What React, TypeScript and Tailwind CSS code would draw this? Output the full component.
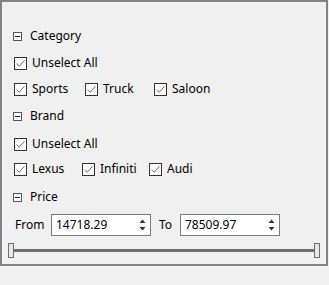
import React from 'react';

const font = { fontFamily: '"Noto Sans", "Liberation Sans", sans-serif' };

const Check = () => (
  <span className="flex h-[13px] w-[13px] shrink-0 items-center justify-center border border-[#333333] bg-white">
    <svg width="11" height="11" viewBox="0 0 11 11">
      <path d="M1.5 5.5 L4.2 8.3 L9.5 2.2" fill="none" stroke="#6b6b6b" strokeWidth="1" />
    </svg>
  </span>
);

const Collapse = () => (
  <span className="flex h-[9px] w-[9px] shrink-0 items-center justify-center border border-[#555555] bg-white">
    <span className="h-px w-[5px] bg-[#222222]" />
  </span>
);

const Header = ({ label, className }: { label: string; className: string }) => (
  <div className={`flex h-5 items-center pl-[11px] ${className}`}>
    <Collapse />
    <span className="ml-2 text-[12px] text-[#000000]">{label}</span>
  </div>
);

const Item = ({ label, width }: { label: string; width?: string }) => (
  <div className={`flex items-center gap-[5px] ${width ?? ''}`}>
    <Check />
    <span className="text-[12px] text-[#000000]">{label}</span>
  </div>
);

const Spin = ({ value }: { value: string }) => (
  <div className="flex h-[22px] w-[100px] items-center justify-between border border-[#7a7a7a] bg-white pl-[4px] pr-[4px]">
    <span className="text-[12px] text-[#000000]">{value}</span>
    <svg width="7" height="14" viewBox="0 0 7 14">
      <path d="M3.5 1.5 L6.5 5 L0.5 5 Z" fill="#333333" />
      <path d="M0.5 9 L6.5 9 L3.5 12.5 Z" fill="#333333" />
    </svg>
  </div>
);

export default function App() {
  return (
    <div className="h-[285px] w-[329px] bg-[#f0f0f0]" style={font}>
      <div className="h-[266px] w-[328px] border-2 border-[#828282] pt-6">
        <Header label="Category" className="" />
        <div className="mt-[7px] flex h-5 items-center pl-3">
          <Item label="Unselect All" />
        </div>
        <div className="mt-[6px] flex h-5 items-center pl-3">
          <Item label="Sports" width="w-[71px]" />
          <Item label="Truck" width="w-[69px]" />
          <Item label="Saloon" />
        </div>
        <Header label="Brand" className="mt-[7px]" />
        <div className="mt-2 flex h-5 items-center pl-3">
          <Item label="Unselect All" />
        </div>
        <div className="mt-[5px] flex h-5 items-center pl-3">
          <Item label="Lexus" width="w-[68px]" />
          <Item label="Infiniti" width="w-[67px]" />
          <Item label="Audi" />
        </div>
        <Header label="Price" className="mt-2" />
        <div className="mt-[7px] flex h-[22px] items-center pl-[13px]">
          <span className="w-[36px] text-[12px] text-[#000000]">From</span>
          <Spin value="14718.29" />
          <span className="ml-2 w-[21px] text-[12px] text-[#000000]">To</span>
          <Spin value="78509.97" />
        </div>
        <div className="mt-[7px] flex h-[15px] items-center pl-[6px] pr-[6px]">
          <span className="h-[15px] w-[6px] shrink-0 border border-[#6d6d6d] bg-[#e6e6e6]" />
          <span className="h-[3px] flex-1 bg-[#6d6d6d]" />
          <span className="h-[15px] w-[6px] shrink-0 border border-[#6d6d6d] bg-[#e6e6e6]" />
        </div>
      </div>
    </div>
  );
}
